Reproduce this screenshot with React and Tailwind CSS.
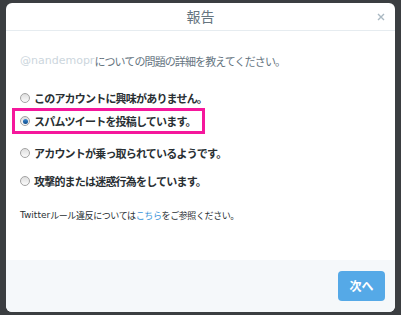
function Radio({ checked }) {
    return (
        <span className="relative flex h-[10px] w-[10px] shrink-0 items-center justify-center rounded-full border border-[#a3a3a3] bg-gradient-to-b from-[#dedede] to-[#fbfbfb]">
            {checked && (
                <span className="h-[5px] w-[5px] rounded-full bg-gradient-to-b from-[#3a8ad2] to-[#0d4c8c]"></span>
            )}
        </span>
    );
}

function Option({ label, checked }) {
    return (
        <div className="flex h-[20px] items-center gap-[4px]">
            <Radio checked={checked} />
            <span className="text-[11px] font-bold tracking-[-0.8px] text-[#292f33]">
                {label}
            </span>
        </div>
    );
}

export default function App() {
    return (
        <div
            className="h-[315px] w-[401px] bg-[#3b3e41] px-[6px] pt-[3px]"
            style={{ fontFamily: '"Noto Sans CJK JP", "Noto Sans", sans-serif' }}
        >
            <div className="flex h-[309px] flex-col overflow-hidden rounded-[6px] bg-white">
                <div className="relative flex h-[28px] shrink-0 items-center justify-center border-b border-[#e6ecf0]">
                    <span className="text-[14px] text-[#66757f]">報告</span>
                    <svg
                        className="absolute right-[10px] top-[10px]"
                        width="8"
                        height="8"
                        viewBox="0 0 8 8"
                    >
                        <path d="M1 1L7 7M7 1L1 7" stroke="#aab8c2" strokeWidth="1.4" />
                    </svg>
                </div>

                <div className="flex flex-1 flex-col px-[14px] pt-[22px]">
                    <div className="flex h-[16px] items-center text-[11px] tracking-[-0.9px] text-[#66757f]">
                        <span
                            className="tracking-normal text-[#ccd6dd]"
                            style={{ fontFamily: '"DejaVu Sans", sans-serif' }}
                        >
                            @nandemopr
                        </span>
                        <span>についての問題の詳細を教えてください。</span>
                    </div>

                    <div className="mt-[19px]">
                        <Option label="このアカウントに興味がありません。" />
                    </div>
                    <div className="-ml-[8px] flex h-[26px] w-[193px] items-center border-[3px] border-[#f5179c] pl-[5px]">
                        <Option label="スパムツイートを投稿しています。" checked />
                    </div>
                    <div className="mt-[9px]">
                        <Option label="アカウントが乗っ取られているようです。" />
                    </div>
                    <div className="mt-[8px]">
                        <Option label="攻撃的または迷惑行為をしています。" />
                    </div>

                    <div className="mt-[17px] flex h-[16px] items-center text-[9px] text-[#292f33]">
                        <span style={{ fontFamily: '"DejaVu Sans", sans-serif' }}>Twitter</span>
                        <span className="tracking-[-0.4px]">
                            ルール違反については
                            <span className="text-[#3b94d9]">こちら</span>
                            をご参照ください。
                        </span>
                    </div>
                </div>

                <div className="flex h-[52px] shrink-0 items-center justify-end bg-[#f5f8fa] pr-[10px]">
                    <button className="flex h-[30px] w-[47px] items-center justify-center rounded-[4px] bg-[#55a9e7] text-[12px] font-bold text-white">
                        次へ
                    </button>
                </div>
            </div>
        </div>
    );
}
